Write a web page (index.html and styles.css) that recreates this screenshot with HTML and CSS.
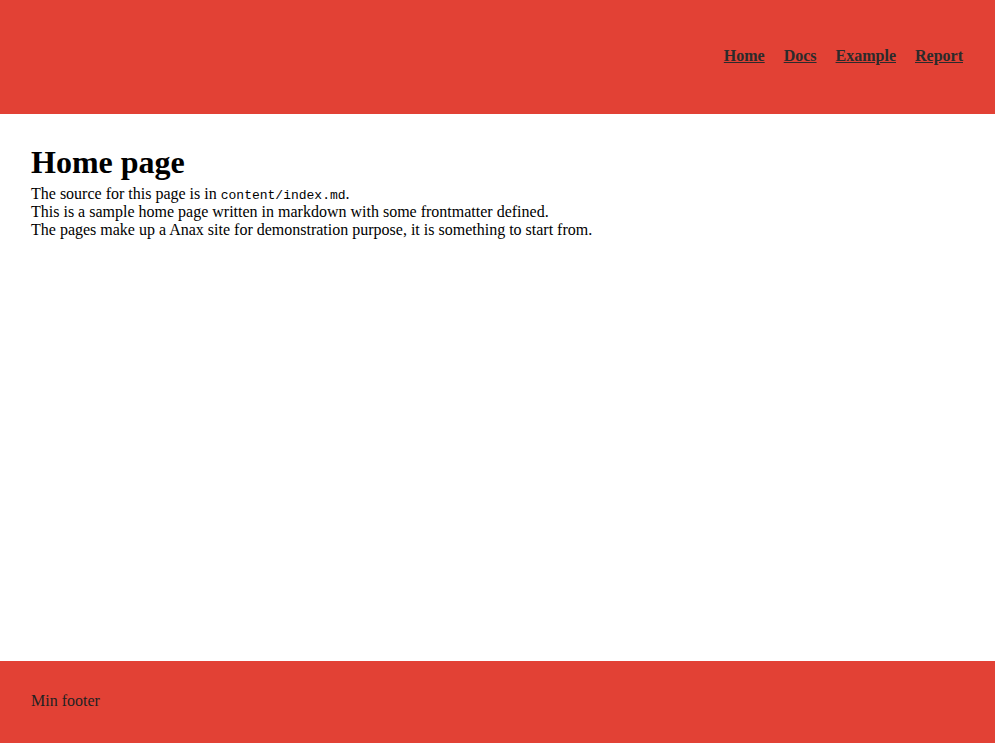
FILE: index.html
```html
<!DOCTYPE html>
<html lang="en">
<head>
<meta charset="utf-8">
<title>Home page</title>
<link rel="stylesheet" href="styles.css">
</head>
<body>
<header class="site-header">
  <nav class="navbar">
    <a href="#">Home</a>
    <a href="#">Docs</a>
    <a href="#">Example</a>
    <a href="#">Report</a>
  </nav>
</header>
<main class="main">
  <h1 class="title">Home page</h1>
  <div class="content">
    <p class="text">The source for this page is in <code>content/index.md</code>.</p>
    <p class="text">This is a sample home page written in markdown with some frontmatter defined.</p>
    <p class="text">The pages make up a Anax site for demonstration purpose, it is something to start from.</p>
  </div>
</main>
<footer class="site-footer">
  <p class="text">Min footer</p>
</footer>
</body>
</html>
```
FILE: styles.css
```css
html, body {
  margin: 0;
  padding: 0;
}
body {
  font-family: "Liberation Serif", "Times New Roman", serif;
  font-size: 16px;
  line-height: normal;
  color: #000;
  background: #fff;
  min-height: 100vh;
  display: flex;
  flex-direction: column;
}
.site-header {
  background: #e24135;
  height: 114px;
  display: flex;
  justify-content: flex-end;
  align-items: center;
  padding: 0 32px;
  box-sizing: border-box;
}
.navbar {
  display: flex;
  gap: 19px;
  padding-bottom: 2px;
}
.navbar a {
  color: #2b2b2b;
  font-weight: bold;
  text-decoration: underline;
}
.main {
  flex: 1;
  padding: 30px 31px;
}
.title {
  margin: 0;
  font-size: 32px;
  line-height: normal;
  font-weight: bold;
}
.content {
  margin-top: 4px;
}
.text {
  margin: 0;
}
code {
  font-family: "Liberation Mono", "Courier New", monospace;
  font-size: 13px;
}
.site-footer {
  background: #e24135;
  height: 82px;
  box-sizing: border-box;
  padding: 31px 31px 0;
  color: #222;
}
```
